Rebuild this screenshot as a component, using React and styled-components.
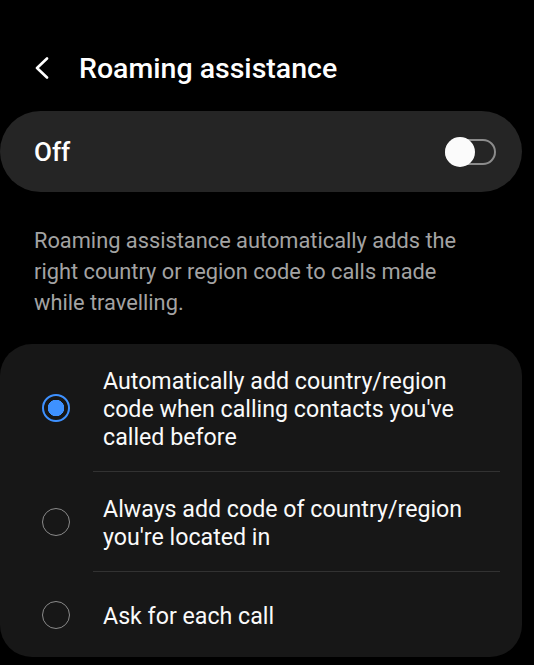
import React, { useState } from 'react'
import styled, { createGlobalStyle } from 'styled-components'

const GlobalStyle = createGlobalStyle`
  html, body {
    margin: 0;
    padding: 0;
    background: #000;
  }
  body {
    font-family: Roboto, "Noto Sans", "Liberation Sans", sans-serif;
    color: #fff;
  }
`

const options = [
  "Automatically add country/region code when calling contacts you've called before",
  'Always add code of country/region you\'re located in',
  'Ask for each call',
]

const App = () => {
  const [selected, setSelected] = useState(0)
  const [on, setOn] = useState(false)

  return (
    <Screen>
      <GlobalStyle />
      <Header>
        <BackButton aria-label="Back">
          <svg width="16" height="22" viewBox="0 0 16 22">
            <path d="M13 1.5 L3 11 L13 20.5" fill="none" stroke="#fff" strokeWidth="2.6" strokeLinecap="round" strokeLinejoin="round" />
          </svg>
        </BackButton>
        <Title>Roaming assistance</Title>
      </Header>

      <SwitchCard onClick={() => setOn(!on)}>
        <SwitchLabel>{on ? 'On' : 'Off'}</SwitchLabel>
        <Track on={on}>
          <Thumb on={on} />
        </Track>
      </SwitchCard>

      <Description>
        Roaming assistance automatically adds the right country or region code to calls made
        while travelling.
      </Description>

      <OptionsCard>
        {options.map((text, i) => (
          <OptionRow key={i} onClick={() => setSelected(i)}>
            <RadioCell>
              <Radio checked={selected === i} />
            </RadioCell>
            <OptionText last={i === options.length - 1}>{text}</OptionText>
          </OptionRow>
        ))}
      </OptionsCard>
    </Screen>
  )
}

const Screen = styled.div`
  width: 534px;
  height: 665px;
  overflow: hidden;
  background: #000;
`

const Header = styled.header`
  display: flex;
  align-items: center;
  height: 88px;
  padding-top: 48px;
  padding-left: 34px;
  box-sizing: border-box;
  margin-bottom: 23px;
`

const BackButton = styled.div`
  display: flex;
  align-items: center;
  width: 45px;
`

const Title = styled.h1`
  margin: 0;
  font-size: 28.5px;
  font-weight: 500;
`

const SwitchCard = styled.div`
  display: flex;
  align-items: center;
  justify-content: space-between;
  width: 522px;
  height: 81px;
  box-sizing: border-box;
  padding: 0 26px 0 34px;
  background: #252525;
  border-radius: 41px;
  cursor: pointer;
`

const SwitchLabel = styled.span`
  font-size: 26px;
  font-weight: 500;
`

const Track = styled.div`
  position: relative;
  width: 51px;
  height: 26px;
  box-sizing: border-box;
  border: 2px solid ${({ on }) => (on ? '#3e91ff' : '#8c8c8c')};
  background: ${({ on }) => (on ? '#3e91ff' : 'transparent')};
  border-radius: 13px;
`

const Thumb = styled.div`
  position: absolute;
  top: -4px;
  left: ${({ on }) => (on ? '21px' : '-2px')};
  width: 30px;
  height: 30px;
  border-radius: 50%;
  background: #fbfbfb;
`

const Description = styled.p`
  margin: 0;
  padding: 33px 50px 26px 34px;
  font-size: 21.8px;
  line-height: 31px;
  color: #a3a3a3;
`

const OptionsCard = styled.section`
  width: 522px;
  box-sizing: border-box;
  background: #171717;
  border-radius: 32px;
`

const OptionRow = styled.div`
  display: flex;
  align-items: stretch;
  cursor: pointer;
`

const RadioCell = styled.div`
  display: flex;
  align-items: center;
  justify-content: center;
  width: 93px;
  flex-shrink: 0;
  padding-left: 20px;
  padding-right: 2px;
  box-sizing: border-box;
`

const Radio = styled.span`
  display: block;
  width: 28px;
  height: 28px;
  box-sizing: border-box;
  border-radius: 50%;
  border: ${({ checked }) => (checked ? '2px solid #3e91ff' : '1.6px solid #8a8a8a')};
  background: ${({ checked }) =>
    checked ? 'radial-gradient(circle, #3e91ff 0 8px, #171717 8.5px)' : 'transparent'};
`

const OptionText = styled.div`
  flex: 1;
  display: flex;
  align-items: center;
  min-height: 85px;
  box-sizing: border-box;
  margin-right: 22px;
  padding: 23px 14px 20px 10px;
  border-bottom: ${({ last }) => (last ? 'none' : '1px solid #323232')};
  font-size: 23.2px;
  line-height: 28px;
  color: #fafafa;
`

export default App
